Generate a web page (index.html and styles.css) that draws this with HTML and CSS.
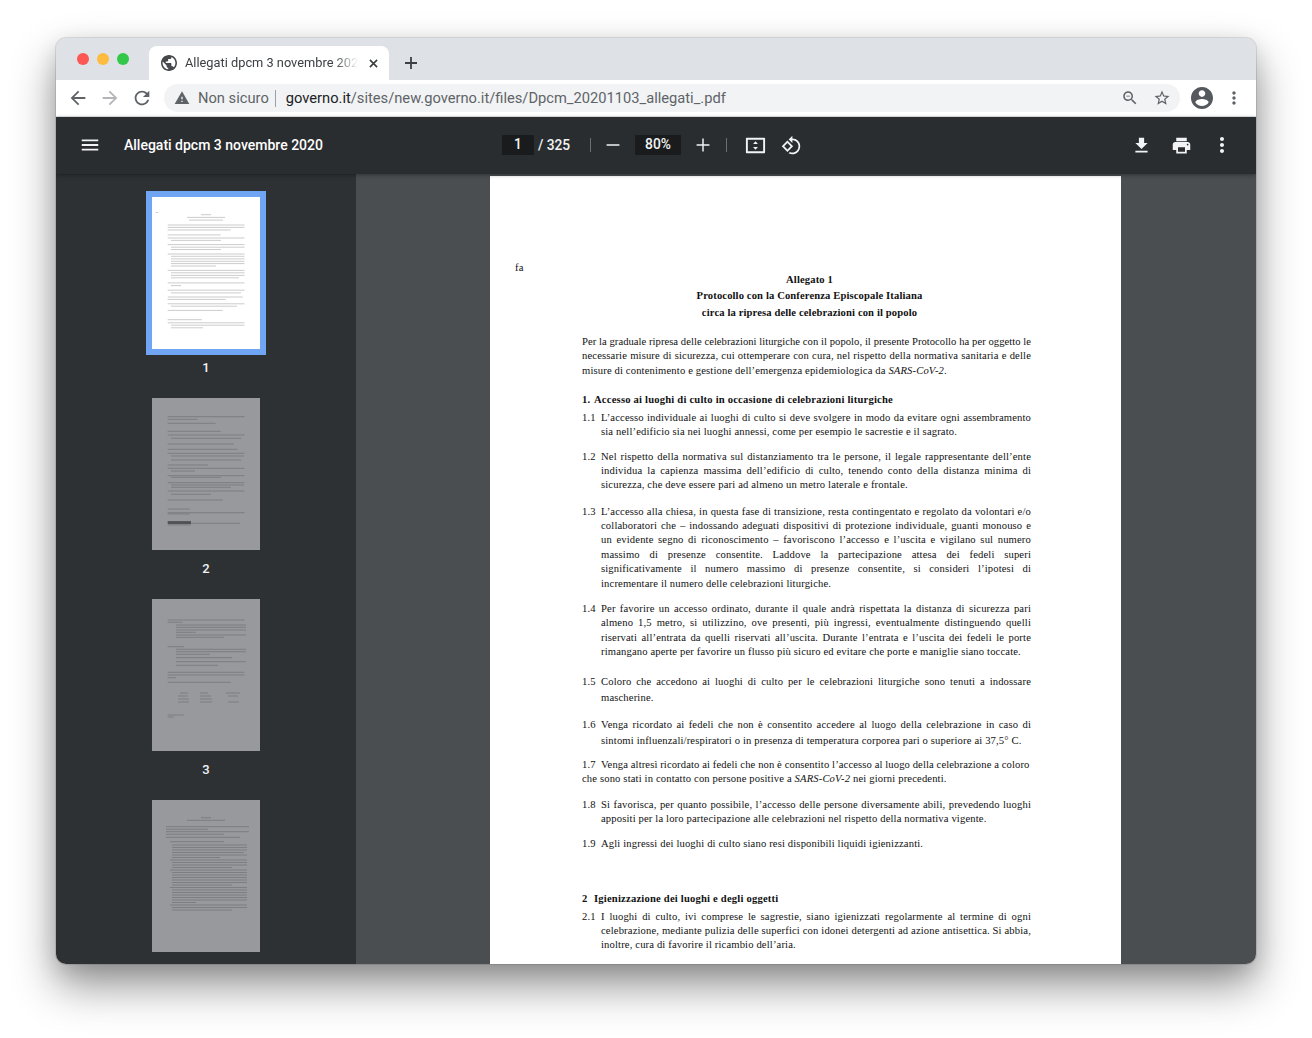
FILE: index.html
```html
<!DOCTYPE html>
<html lang="it">
<head>
<meta charset="utf-8">
<title>Allegati dpcm 3 novembre 2020</title>
<link rel="stylesheet" href="styles.css">
</head>
<body>
<div class="window">
  <div class="tabstrip">
    <div class="lights"><i class="light red"></i><i class="light yellow"></i><i class="light green"></i></div>
    <div class="tab">
      <svg class="globe" viewBox="2 2 20 20"><path d="M12 2C6.48 2 2 6.48 2 12s4.48 10 10 10 10-4.48 10-10S17.52 2 12 2zm-1 17.93c-3.95-.49-7-3.85-7-7.93 0-.62.08-1.21.21-1.79L9 15v1c0 1.1.9 2 2 2v1.93zm6.9-2.54c-.26-.81-1-1.39-1.9-1.39h-1v-3c0-.55-.45-1-1-1H8v-2h2c.55 0 1-.45 1-1V7h2c1.1 0 2-.9 2-2v-.41c2.93 1.19 5 4.06 5 7.41 0 2.08-.8 3.97-2.1 5.39z"/></svg>
      <span class="tabtitle">Allegati dpcm 3 novembre 2020</span>
      <svg class="tabclose" viewBox="0 0 10 10"><path d="M1 1l8 8M9 1l-8 8"/></svg>
    </div>
    <svg class="newtab" viewBox="0 0 12 12"><path d="M6 0v12M0 6h12"/></svg>
  </div>
  <div class="navbar">
    <svg class="navicon" viewBox="0 0 24 24"><path d="M20 11H7.83l5.59-5.59L12 4l-8 8 8 8 1.41-1.41L7.83 13H20v-2z"/></svg>
    <svg class="navicon off" viewBox="0 0 24 24"><path d="M12 4l-1.41 1.41L16.17 11H4v2h12.17l-5.58 5.59L12 20l8-8z"/></svg>
    <svg class="navicon" viewBox="0 0 24 24"><path d="M17.65 6.35C16.2 4.9 14.21 4 12 4c-4.42 0-7.99 3.58-7.99 8s3.57 8 7.99 8c3.73 0 6.84-2.55 7.73-6h-2.08c-.82 2.33-3.04 4-5.65 4-3.31 0-6-2.69-6-6s2.69-6 6-6c1.66 0 3.14.69 4.22 1.78L13 11h7V4l-2.35 2.35z"/></svg>
    <div class="omnibox">
      <svg class="warn" viewBox="0 0 24 24"><path d="M1 21h22L12 2 1 21zm12-3h-2v-2h2v2zm0-4h-2v-4h2v4z"/></svg>
      <span class="insecure">Non sicuro</span>
      <span class="omnisep"></span>
      <span class="url"><b>governo.it</b>/sites/new.governo.it/files/Dpcm_20201103_allegati_.pdf</span>
      <svg class="omniicon zoomicon" viewBox="0 0 24 24"><path d="M15.5 14h-.79l-.28-.27C15.41 12.59 16 11.11 16 9.5 16 5.91 13.09 3 9.5 3S3 5.91 3 9.5 5.91 16 9.5 16c1.61 0 3.09-.59 4.23-1.57l.27.28v.79l5 4.99L20.49 19l-4.99-5zm-6 0C7.01 14 5 11.99 5 9.5S7.01 5 9.5 5 14 7.01 14 9.5 11.99 14 9.5 14zM7 9h5v1H7z"/></svg>
      <svg class="omniicon staricon" viewBox="0 0 24 24"><path d="M22 9.24l-7.19-.62L12 2 9.19 8.63 2 9.24l5.46 4.73L5.82 21 12 17.27 18.18 21l-1.63-7.03L22 9.24zM12 15.4l-3.76 2.27 1-4.28-3.32-2.88 4.38-.38L12 6.1l1.71 4.04 4.38.38-3.32 2.88 1 4.28L12 15.4z"/></svg>
    </div>
    <svg class="avatar" viewBox="2 2 20 20"><path d="M12 2C6.48 2 2 6.48 2 12s4.48 10 10 10 10-4.48 10-10S17.52 2 12 2zm0 3c1.66 0 3 1.34 3 3s-1.34 3-3 3-3-1.34-3-3 1.34-3 3-3zm0 14.2c-2.5 0-4.71-1.28-6-3.22.03-1.99 4-3.08 6-3.08 1.99 0 5.97 1.09 6 3.08-1.29 1.94-3.5 3.22-6 3.22z"/></svg>
    <svg class="navdots" viewBox="0 0 24 24"><path d="M12 8c1.1 0 2-.9 2-2s-.9-2-2-2-2 .9-2 2 .9 2 2 2zm0 2c-1.1 0-2 .9-2 2s.9 2 2 2 2-.9 2-2-.9-2-2-2zm0 6c-1.1 0-2 .9-2 2s.9 2 2 2 2-.9 2-2-.9-2-2-2z"/></svg>
  </div>
  <div class="pdfbar">
    <span class="slot"><svg class="pdficon menu" viewBox="0 0 24 24"><path d="M3 18h18v-2H3v2zm0-5h18v-2H3v2zm0-7v2h18V6H3z"/></svg></span>
    <div class="doctitle">Allegati dpcm 3 novembre 2020</div>
    <div class="pagebox">1</div>
    <div class="pagecount">/ 325</div>
    <span class="barsep first"></span>
    <span class="slot minus"><svg class="pdficon sm" viewBox="0 0 24 24"><path d="M19 12.8H5v-1.6h14v1.6z"/></svg></span>
    <div class="zoombox">80%</div>
    <span class="slot plus"><svg class="pdficon sm" viewBox="0 0 24 24"><path d="M19 12.8h-6.2V19h-1.6v-6.2H5v-1.6h6.2V5h1.6v6.2H19v1.6z"/></svg></span>
    <span class="barsep second"></span>
    <span class="slot fit"><svg class="pdficon fitglyph" viewBox="0 0 24 24"><path d="M3 4h18c.55 0 1 .45 1 1v14c0 .55-.45 1-1 1H3c-.55 0-1-.45-1-1V5c0-.55.45-1 1-1zm1 2v12h16V6H4zm8 1.5l2.5 3h-5l2.5-3zm0 9l-2.5-3h5l-2.5 3z"/></svg></span>
    <span class="slot rotate"><svg class="pdficon md" viewBox="0 0 24 24"><path d="M7.34 6.41L.86 12.9l6.49 6.48 6.49-6.48-6.5-6.49zM3.69 12.9l3.66-3.66L11 12.9l-3.66 3.66-3.65-3.66zm15.67-6.26C17.61 4.88 15.3 4 13 4V.76L8.76 5 13 9.24V6c1.79 0 3.58.68 4.95 2.05 2.73 2.73 2.73 7.17 0 9.9C16.58 19.32 14.79 20 13 20c-.97 0-1.94-.21-2.84-.61l-1.49 1.49C10.02 21.62 11.51 22 13 22c2.3 0 4.61-.88 6.36-2.64 3.52-3.51 3.52-9.21 0-12.72z"/></svg></span>
    <div class="baractions">
      <span class="slot"><svg class="pdficon md" viewBox="0 0 24 24"><path d="M19 9h-4V3H9v6H5l7 7 7-7zM5 18v2h14v-2H5z"/></svg></span>
      <span class="slot"><svg class="pdficon md" viewBox="0 0 24 24"><path d="M19 8H5c-1.66 0-3 1.34-3 3v6h4v4h12v-4h4v-6c0-1.66-1.34-3-3-3zm-3 11H8v-5h8v5zm3-7c-.55 0-1-.45-1-1s.45-1 1-1 1 .45 1 1-.45 1-1 1zm-1-9H6v4h12V3z"/></svg></span>
      <span class="slot"><svg class="pdficon" viewBox="0 0 24 24"><path d="M12 8c1.1 0 2-.9 2-2s-.9-2-2-2-2 .9-2 2 .9 2 2 2zm0 2c-1.1 0-2 .9-2 2s.9 2 2 2 2-.9 2-2-.9-2-2-2zm0 6c-1.1 0-2 .9-2 2s.9 2 2 2 2-.9 2-2-.9-2-2-2z"/></svg></span>
    </div>
  </div>
  <div class="viewer">
    <aside class="sidebar">
      <div class="thumb selected">
        <div class="frame">
          <svg class="thumbpage" viewBox="0 0 108 152"><path class="ink" d="M3.6 15.5h2.4M49 17.7h10M35 20.4h38M37 23.1h34M15.7 28h76.8M15.7 30.4h76.8M15.7 33h63M15.7 37.9h53M15.7 41h76.8M19 43.4h50M15.7 47.6h76.8M19 50.2h73.5M19 52.5h50M15.7 57h76.8M19 59.3h73.5M19 61.9h73.5M19 64.3h73.5M19 66.6h73.5M19 69h45M15.7 73.4h76.8M19 75.8h73.5M19 78.4h73.5M19 80.8h68M15.7 85.9h76.8M19 88.6h10M15.7 93.2h76.8M19 95.9h70M15.7 100h75M15.7 102.4h58M15.7 106.8h76.8M19 109.2h66M15.7 113.4h55M15.7 122.7h34M15.7 125.8h76.8M19 128.2h73.5M19 130.8h32"/></svg>
        </div>
        <div class="thumbnum">1</div>
      </div>
      <div class="thumb">
        <div class="frame">
          <svg class="thumbpage" viewBox="0 0 108 152"><path class="ink" d="M15.7 18.7h76.8M15.7 21.3h30M15.7 25.3h48M15.7 33.3h53M15.7 37h76.8M19 40.3h70M15.7 46h66M15.7 51.3h70M15.7 55.3h76.8M19 58h73M19 62h70M15.7 67h40M15.7 70.3h76.8M19 73h24M15.7 77.7h76.8M19 79.3h50M15.7 84.7h76.8M19 87h73M19 89.3h60M15.7 93h76.8M19 96.3h40M15.7 102h55M15.7 111h22M15.7 114.7h76.8M15.7 116h22"/><path class="inkbold" d="M15.7 124.6h23.3"/><path class="ink" d="M39 125.3h49M15.7 127h23"/></svg>
        </div>
        <div class="thumbnum">2</div>
      </div>
      <div class="thumb">
        <div class="frame">
          <svg class="thumbpage" viewBox="0 0 108 152"><path class="ink" d="M15.7 21h76.8M15.7 23.3h15M24 26h70M24 28.3h70M24 31h70M24 33.3h20M24 36h70M24 38.3h48M15.7 47.7h16M24 50.3h70M24 52.7h70M24 55.3h34M24 58.7h56M24 62.7h70M24 66.3h42M15.7 73.3h76.8M15.7 76h76.8M15.7 78.7h8M15.7 83.3h63M28 94h8M26 97h10M26 100h11M26 103h11M48 94h8M48 97h11M48 100h12M48 103h12M74 94h14M76 97h10M76 103h11M15.7 116h16M15.7 118h6"/></svg>
        </div>
        <div class="thumbnum">3</div>
      </div>
      <div class="thumb">
        <div class="frame">
          <svg class="thumbpage" viewBox="0 0 108 152"><path class="ink" d="M49 17.7h10M35 20.3h38M14 26.7h83M14 29.3h42M14 31.7h83M14 34.3h58M14 37.3h74M18 41.7h54M20 45h75M20 47.5h75M20 50h75M20 52.5h72M20 55h75M20 57.5h48M18 60h77M20 62.5h75M20 65h75M20 67.5h60M18 70h77M20 72.5h75M20 75h75M20 77.5h75M20 80h75M20 82.5h75M20 85h60M18 87.5h77M20 90h75M20 92.5h75M20 95h75M20 97.5h75M20 100h75M20 102.5h24M18 105h77M20 107.5h75M20 110h60"/></svg>
        </div>
      </div>
    </aside>
    <main class="stage">
      <article class="page">
        <div class="fa">fa</div>
        <header class="heading">
          <div>Allegato 1</div>
          <div>Protocollo con la Conferenza Episcopale Italiana</div>
          <div>circa la ripresa delle celebrazioni con il popolo</div>
        </header>
        <div class="plain gap-intro">
          <span class="l narrow">Per la graduale ripresa delle celebrazioni liturgiche con il popolo, il presente Protocollo ha per oggetto le</span>
          <span class="l">necessarie misure di sicurezza, cui ottemperare con cura, nel rispetto della normativa sanitaria e delle</span>
          <span class="l end">misure di contenimento e gestione dell’emergenza epidemiologica da <em>SARS-CoV-2</em>.</span>
        </div>
        <h2 class="section gap-h1"><span class="secnum">1.</span>Accesso ai luoghi di culto in occasione di celebrazioni liturgiche</h2>
        <div class="item gap-3"><span class="n">1.1</span><div>
          <span class="l">L’accesso individuale ai luoghi di culto si deve svolgere in modo da evitare ogni assembramento</span>
          <span class="l end">sia nell’edificio sia nei luoghi annessi, come per esempio le sacrestie e il sagrato.</span>
        </div></div>
        <div class="item gap-10"><span class="n">1.2</span><div>
          <span class="l">Nel rispetto della normativa sul distanziamento tra le persone, il legale rappresentante dell’ente</span>
          <span class="l">individua la capienza massima dell’edificio di culto, tenendo conto della distanza minima di</span>
          <span class="l end">sicurezza, che deve essere pari ad almeno un metro laterale e frontale.</span>
        </div></div>
        <div class="item gap-12"><span class="n">1.3</span><div>
          <span class="l">L’accesso alla chiesa, in questa fase di transizione, resta contingentato e regolato da volontari e/o</span>
          <span class="l">collaboratori che – indossando adeguati dispositivi di protezione individuale, guanti monouso e</span>
          <span class="l">un evidente segno di riconoscimento – favoriscono l’accesso e l’uscita e vigilano sul numero</span>
          <span class="l">massimo di presenze consentite. Laddove la partecipazione attesa dei fedeli superi</span>
          <span class="l">significativamente il numero massimo di presenze consentite, si consideri l’ipotesi di</span>
          <span class="l end">incrementare il numero delle celebrazioni liturgiche.</span>
        </div></div>
        <div class="item gap-11"><span class="n">1.4</span><div>
          <span class="l">Per favorire un accesso ordinato, durante il quale andrà rispettata la distanza di sicurezza pari</span>
          <span class="l">almeno 1,5 metro, si utilizzino, ove presenti, più ingressi, eventualmente distinguendo quelli</span>
          <span class="l">riservati all’entrata da quelli riservati all’uscita. Durante l’entrata e l’uscita dei fedeli le porte</span>
          <span class="l end">rimangano aperte per favorire un flusso più sicuro ed evitare che porte e maniglie siano toccate.</span>
        </div></div>
        <div class="item tall gap-15"><span class="n">1.5</span><div>
          <span class="l">Coloro che accedono ai luoghi di culto per le celebrazioni liturgiche sono tenuti a indossare</span>
          <span class="l end">mascherine.</span>
        </div></div>
        <div class="item tall gap-11b"><span class="n">1.6</span><div>
          <span class="l">Venga ricordato ai fedeli che non è consentito accedere al luogo della celebrazione in caso di</span>
          <span class="l end">sintomi influenzali/respiratori o in presenza di temperatura corporea pari o superiore ai 37,5° C.</span>
        </div></div>
        <div class="plain gap-9">
          <span class="l end snug"><span class="n inline">1.7</span>Venga altresì ricordato ai fedeli che non è consentito l’accesso al luogo della celebrazione a coloro</span>
          <span class="l end">che sono stati in contatto con persone positive a <em>SARS-CoV-2</em> nei giorni precedenti.</span>
        </div>
        <div class="item gap-11"><span class="n">1.8</span><div>
          <span class="l">Si favorisca, per quanto possibile, l’accesso delle persone diversamente abili, prevedendo luoghi</span>
          <span class="l end">appositi per la loro partecipazione alle celebrazioni nel rispetto della normativa vigente.</span>
        </div></div>
        <div class="item gap-10"><span class="n">1.9</span><div>
          <span class="l end">Agli ingressi dei luoghi di culto siano resi disponibili liquidi igienizzanti.</span>
        </div></div>
        <h2 class="section gap-h2"><span class="secnum">2</span>Igienizzazione dei luoghi e degli oggetti</h2>
        <div class="item gap-3"><span class="n">2.1</span><div>
          <span class="l">I luoghi di culto, ivi comprese le sagrestie, siano igienizzati regolarmente al termine di ogni</span>
          <span class="l">celebrazione, mediante pulizia delle superfici con idonei detergenti ad azione antisettica. Si abbia,</span>
          <span class="l end">inoltre, cura di favorire il ricambio dell’aria.</span>
        </div></div>
      </article>
    </main>
  </div>
</div>
</body>
</html>
```
FILE: styles.css
```css
* { box-sizing: border-box; }
html, body { margin: 0; height: 100%; background: #fff; overflow: hidden; }
body { padding: 38px 56px 0; font-family: Roboto, "Liberation Sans", sans-serif; }

.window {
  width: 1200px;
  height: 926px;
  border-radius: 10px;
  overflow: hidden;
  display: flex;
  flex-direction: column;
  background: #dee1e6;
  box-shadow: 0 0 0 1px rgba(0,0,0,.1), 0 22px 44px rgba(0,0,0,.42), 0 6px 22px rgba(0,0,0,.12);
}

/* tab strip */
.tabstrip { height: 42px; flex: none; display: flex; align-items: flex-end; background: #dee1e6; }
.lights { display: flex; gap: 8px; width: 93px; padding: 0 0 15px 21px; align-self: flex-end; }
.light { width: 12px; height: 12px; border-radius: 50%; }
.red { background: #fc5753; }
.yellow { background: #fdbc40; }
.green { background: #34c84a; }
.tab { width: 240px; height: 34px; background: #fff; border-radius: 8px 8px 0 0; display: flex; align-items: center; padding-left: 12px; }
.globe { width: 16px; height: 16px; fill: #45484c; flex: none; }
.tabtitle {
  width: 173px; margin: -2px 0 0 8px; font-size: 12.8px; color: #3c4043; white-space: nowrap; overflow: hidden;
  -webkit-mask-image: linear-gradient(90deg, #000 150px, transparent 173px);
  mask-image: linear-gradient(90deg, #000 150px, transparent 173px);
}
.tabclose { width: 9px; height: 9px; margin-left: 11px; stroke: #3c4043; stroke-width: 1.8; fill: none; flex: none; }
.newtab { width: 12px; height: 12px; margin: 0 0 11px 16px; stroke: #3c4043; stroke-width: 1.8; fill: none; flex: none; }

/* nav */
.navbar { height: 37px; flex: none; background: #fff; display: flex; align-items: center; padding-left: 11px; border-bottom: 1px solid #e6e8ea; }
.navicon { width: 22px; height: 22px; fill: #5f6368; margin-right: 10px; flex: none; }
.navicon.off { fill: #b3b5b8; }
.omnibox { width: 1016px; height: 28px; margin-left: 1px; border-radius: 14px; background: #f1f3f4; display: flex; align-items: center; padding-left: 10px; flex: none; }
.warn { width: 16px; height: 16px; fill: #5f6368; flex: none; }
.insecure { margin-left: 8px; font-size: 14.7px; color: #5f6368; white-space: nowrap; }
.omnisep { width: 1px; height: 17px; background: #9aa0a6; margin: 0 10px 0 6px; flex: none; }
.url { font-size: 14.7px; color: #5f6368; white-space: nowrap; flex: 1; }
.url b { font-weight: 400; color: #202124; }
.omniicon { height: 18px; width: 18px; fill: #5f6368; flex: none; }
.zoomicon { margin-right: 14px; }
.staricon { margin-right: 9px; }
.avatar { width: 22px; height: 22px; fill: #55585c; margin-left: 11px; flex: none; }
.navdots { width: 20px; height: 20px; fill: #5f6368; margin-left: 11px; flex: none; }

/* pdf toolbar */
.pdfbar { height: 57px; flex: none; position: relative; z-index: 2; background: #2a2d30; display: flex; align-items: center; padding: 0 22px 1px; color: #f1f3f4; box-shadow: 0 1px 4px rgba(0,0,0,.35); }
.slot { width: 24px; height: 24px; display: flex; align-items: center; justify-content: center; flex: none; }
.pdficon { width: 24px; height: 24px; fill: #f1f3f4; flex: none; }
.pdficon.menu { width: 22px; height: 22px; }
.pdficon.sm { width: 22px; height: 22px; }
.pdficon.md { width: 21px; height: 21px; margin-right: 1px; }
.pdficon.fitglyph { width: 23px; height: 23px; }
.doctitle { width: 378px; margin-left: 22px; font-size: 14px; font-weight: 500; color: #fff; white-space: nowrap; flex: none; }
.pagebox { width: 32px; height: 20px; background: #191b1c; text-align: center; font-size: 13.8px; line-height: 19px; font-weight: 500; flex: none; }
.pagecount { width: 36px; margin-left: 4px; font-size: 13.8px; letter-spacing: -.05px; line-height: 19px; font-weight: 500; white-space: nowrap; flex: none; }
.barsep { width: 1px; height: 14px; background: #6c6f72; flex: none; }
.barsep.first { margin-left: 16px; }
.barsep.second { margin-left: 11px; }
.minus { margin-left: 10px; }
.zoombox { width: 46px; height: 20px; margin-left: 10px; background: #191b1c; text-align: center; font-size: 13.8px; line-height: 19px; font-weight: 500; flex: none; }
.plus { margin-left: 10px; }
.fit { margin-left: 16px; }
.rotate { margin-left: 12.5px; }
.baractions { margin-left: auto; display: flex; gap: 16px; }

/* viewer */
.viewer { flex: 1; min-height: 0; display: flex; }
.sidebar { width: 300px; flex: none; background: #2d3134; padding-top: 17px; display: flex; flex-direction: column; align-items: center; overflow: hidden; }
.thumb { flex: none; margin-bottom: 13px; display: flex; flex-direction: column; align-items: center; }
.frame { border: 6px solid transparent; width: 120px; height: 164px; }
.selected .frame { border-color: #6fa5f2; }
.thumbpage { display: block; width: 108px; height: 152px; background: #97999c; }
.selected .thumbpage { background: #fff; }
.ink { fill: none; stroke: #505255; stroke-width: .9; stroke-opacity: .42; filter: blur(.4px); }
.selected .ink { stroke: #777; stroke-opacity: .42; }
.inkbold { fill: none; stroke: #505255; stroke-width: 3; filter: blur(.3px); }
.thumbnum { height: 24px; line-height: 26px; font-size: 13px; font-weight: 500; color: #f1f3f4; }

.stage { flex: 1; min-width: 0; background: #4a4e51; display: flex; justify-content: center; padding: 2px 1px 0 0; overflow: hidden; }
.page {
  width: 631px; flex: none; height: 892px; background: #fff; color: #111;
  padding: 84.6px 90px 0 92px;
  font-family: "Liberation Serif", "Times New Roman", serif; font-size: 10.6px; line-height: 14.4px; letter-spacing: .15px;
}
.fa { margin-left: -67px; height: 14.4px; }
.heading { margin-top: -3.2px; padding-left: 6px; text-align: center; font-weight: 700; line-height: 16.4px; letter-spacing: .12px; }
.plain { display: block; }
.l { display: block; white-space: nowrap; text-align: justify; text-align-last: justify; }
.l.end { text-align-last: left; }
.l.narrow { letter-spacing: .03px; }
.l.snug { letter-spacing: .11px; }
.item { display: grid; grid-template-columns: 19px 1fr; }
.item.tall { line-height: 16px; }
.n { display: block; }
.n.inline { display: inline-block; width: 19px; }
.section { margin-bottom: 0; font-size: inherit; line-height: inherit; font-weight: 700; letter-spacing: .2px; }
.secnum { display: inline-block; width: 12px; }
.gap-intro { margin-top: 13.8px; }
.gap-h1 { margin-top: 14.5px; }
.gap-3 { margin-top: 3.6px; }
.gap-9 { margin-top: 8.8px; }
.gap-10 { margin-top: 10.2px; }
.gap-11 { margin-top: 10.9px; }
.gap-11b { margin-top: 11px; }
.gap-12 { margin-top: 11.8px; }
.gap-15 { margin-top: 14.6px; }
.gap-h2 { margin-top: 40.6px; }
```
